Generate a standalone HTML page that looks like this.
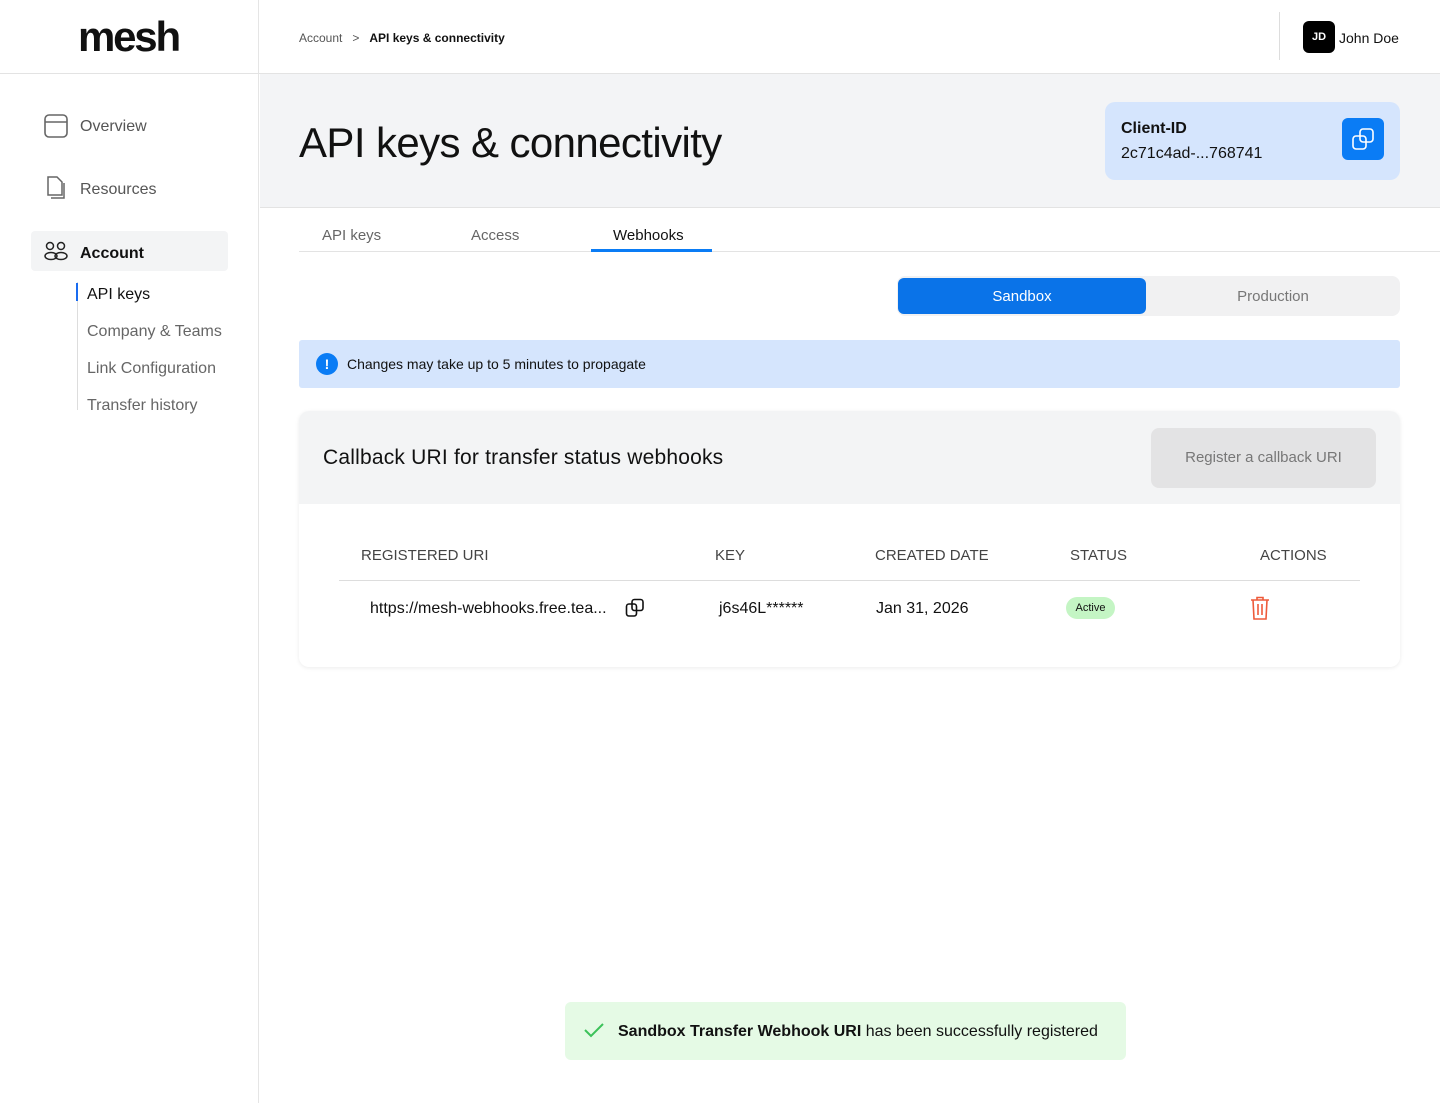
<!DOCTYPE html>
<html><head><meta charset="utf-8"><style>
*{box-sizing:border-box;margin:0;padding:0}
body{width:1440px;height:1103px;position:relative;background:#fff;font-family:"Liberation Sans",sans-serif;color:#111;overflow:hidden}
.abs{position:absolute}
.sb{left:0;top:0;width:259px;height:1103px;border-right:1px solid #e5e5e5;background:#fff}
.nav{font-size:16px;color:#555}
.sub{font-size:16px;color:#666}
</style></head><body>
<div class="abs sb"></div>
<div class="abs" style="left:0;top:73px;width:1440px;height:1px;background:#e3e3e3"></div>
<div class="abs" style="left:78px;top:12px;font-size:42px;font-weight:900;letter-spacing:-2.2px;line-height:50px">mesh</div>
<svg class="abs" style="left:44px;top:114px" width="24" height="24" viewBox="0 0 24 24" fill="none" stroke="#666" stroke-width="1.6"><rect x="1" y="1" width="22" height="22" rx="4"/><line x1="1" y1="8" x2="23" y2="8"/></svg>
<div class="abs nav" style="left:80px;top:118px">Overview</div>
<svg class="abs" style="left:46px;top:176px" width="22" height="24" viewBox="0 0 22 24" fill="none" stroke="#666" stroke-width="1.5"><path d="M2 1h9l5 5v13H2z"/><path d="M18 7v15H5"/></svg>
<div class="abs nav" style="left:80px;top:181px">Resources</div>
<div class="abs" style="left:31px;top:231px;width:197px;height:40px;background:#f3f4f5;border-radius:4px"></div>
<svg class="abs" style="left:44px;top:241px" width="24" height="20" viewBox="0 0 24 20" fill="none" stroke="#222" stroke-width="1.5"><circle cx="6" cy="5" r="3.5"/><circle cx="17" cy="5" r="3.5"/><ellipse cx="7" cy="15" rx="6" ry="3.5"/><ellipse cx="17" cy="15" rx="6" ry="3.5"/></svg>
<div class="abs" style="left:80px;top:245px;font-size:16px;font-weight:bold">Account</div>
<div class="abs" style="left:77px;top:282px;width:1px;height:128px;background:#ddd"></div>
<div class="abs" style="left:76px;top:283px;width:2px;height:18px;background:#1a6cf0"></div>
<div class="abs" style="left:87px;top:286px;font-size:16px;color:#111">API keys</div>
<div class="abs sub" style="left:87px;top:323px">Company &amp; Teams</div>
<div class="abs sub" style="left:87px;top:360px">Link Configuration</div>
<div class="abs sub" style="left:87px;top:397px">Transfer history</div>

<div class="abs" style="left:299px;top:31px;font-size:12px;color:#555">Account &nbsp;&nbsp;&gt;&nbsp;&nbsp; <b style="color:#111">API keys &amp; connectivity</b></div>
<div class="abs" style="left:1279px;top:12px;width:1px;height:48px;background:#ddd"></div>
<div class="abs" style="left:1303px;top:21px;width:32px;height:32px;background:#000;border-radius:6px;color:#fff;font-size:11px;font-weight:bold;text-align:center;line-height:32px">JD</div>
<div class="abs" style="left:1339px;top:30px;font-size:14px">John Doe</div>

<div class="abs" style="left:260px;top:74px;width:1180px;height:134px;background:#f3f4f6;border-bottom:1px solid #e3e3e3"></div>
<div class="abs" style="left:299px;top:117px;font-size:42px;line-height:52px;color:#111;letter-spacing:-0.6px">API keys &amp; connectivity</div>
<div class="abs" style="left:1105px;top:102px;width:295px;height:78px;background:#d5e5fd;border-radius:10px"></div>
<div class="abs" style="left:1121px;top:120px;font-size:16px;font-weight:bold">Client-ID</div>
<div class="abs" style="left:1121px;top:145px;font-size:16px">2c71c4ad-...768741</div>
<div class="abs" style="left:1342px;top:118px;width:42px;height:42px;background:#0a7cf5;border-radius:6px"></div>
<svg class="abs" style="left:1351px;top:127px" width="24" height="24" viewBox="0 0 24 24" fill="none" stroke="#fff" stroke-width="1.6"><rect x="2" y="9" width="13" height="13" rx="3"/><rect x="9" y="2" width="13" height="13" rx="3"/></svg>

<div class="abs" style="left:299px;top:251px;width:1141px;height:1px;background:#e3e3e3"></div>
<div class="abs" style="left:322px;top:227px;font-size:15px;color:#666">API keys</div>
<div class="abs" style="left:471px;top:227px;font-size:15px;color:#666">Access</div>
<div class="abs" style="left:613px;top:227px;font-size:15px;color:#111">Webhooks</div>
<div class="abs" style="left:591px;top:249px;width:121px;height:3px;background:#0a7cf5"></div>

<div class="abs" style="left:897px;top:276px;width:503px;height:40px;background:#f1f1f2;border-radius:8px"></div>
<div class="abs" style="left:898px;top:278px;width:248px;height:36px;background:#0a73e8;border-radius:6px;color:#fff;font-size:15px;text-align:center;line-height:38px">Sandbox</div>
<div class="abs" style="left:1146px;top:278px;width:254px;height:36px;color:#777;font-size:15px;text-align:center;line-height:38px">Production</div>

<div class="abs" style="left:299px;top:340px;width:1101px;height:48px;background:#d5e5fd;border-radius:3px"></div>
<div class="abs" style="left:316px;top:353px;width:22px;height:22px;border-radius:50%;background:#0a7cf5;color:#fff;font-size:14px;font-weight:bold;text-align:center;line-height:22px">!</div>
<div class="abs" style="left:347px;top:356px;font-size:14px">Changes may take up to 5 minutes to propagate</div>

<div class="abs" style="left:299px;top:411px;width:1101px;height:256px;border-radius:10px;background:#fff;box-shadow:0 1px 4px rgba(0,0,0,.08);overflow:hidden">
<div style="height:93px;background:#f3f4f5"></div></div>
<div class="abs" style="left:323px;top:446px;font-size:21px;letter-spacing:0.2px">Callback URI for transfer status webhooks</div>
<div class="abs" style="left:1151px;top:428px;width:225px;height:60px;background:#e3e3e4;border-radius:8px;color:#777;font-size:15px;text-align:center;line-height:60px">Register a callback URI</div>
<div class="abs" style="left:361px;top:547px;font-size:15px;color:#444">REGISTERED URI</div>
<div class="abs" style="left:715px;top:547px;font-size:15px;color:#444">KEY</div>
<div class="abs" style="left:875px;top:547px;font-size:15px;color:#444">CREATED DATE</div>
<div class="abs" style="left:1070px;top:547px;font-size:15px;color:#444">STATUS</div>
<div class="abs" style="left:1260px;top:547px;font-size:15px;color:#444">ACTIONS</div>
<div class="abs" style="left:339px;top:580px;width:1021px;height:1px;background:#ddd"></div>
<div class="abs" style="left:370px;top:600px;font-size:16px">https://mesh-webhooks.free.tea...</div>
<svg class="abs" style="left:625px;top:598px" width="20" height="20" viewBox="0 0 20 20" fill="none" stroke="#111" stroke-width="1.6"><rect x="1.5" y="6" width="10" height="12" rx="2.5"/><rect x="7" y="1.5" width="11" height="11" rx="2.5"/></svg>
<div class="abs" style="left:719px;top:600px;font-size:16px">j6s46L******</div>
<div class="abs" style="left:876px;top:600px;font-size:16px">Jan 31, 2026</div>
<div class="abs" style="left:1066px;top:597px;width:49px;height:22px;background:#c4f5c4;border-radius:11px;font-size:11px;text-align:center;line-height:22px">Active</div>
<svg class="abs" style="left:1250px;top:596px" width="20" height="24" viewBox="0 0 20 24" fill="none" stroke="#ee5a3a" stroke-width="1.6"><path d="M1 4h18M7 4V1.5h6V4M3 4l1 19h12l1-19M8 8v11M12 8v11"/></svg>

<div class="abs" style="left:565px;top:1002px;width:561px;height:58px;background:#e5fae5;border-radius:6px"></div>
<svg class="abs" style="left:584px;top:1022px" width="20" height="16" viewBox="0 0 20 16" fill="none" stroke="#3cc25a" stroke-width="2"><path d="M1 8l6 6L19 2"/></svg>
<div class="abs" style="left:618px;top:1023px;font-size:16px"><b>Sandbox Transfer Webhook URI</b> has been successfully registered</div>
</body></html>
